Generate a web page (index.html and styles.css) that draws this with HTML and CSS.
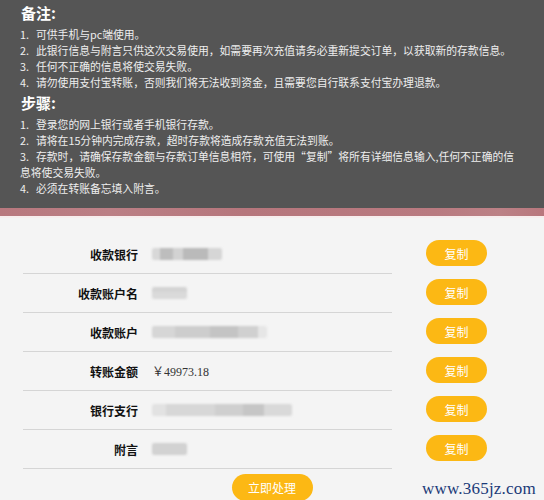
FILE: index.html
```html
<!DOCTYPE html>
<html lang="zh-CN">
<head>
<meta charset="utf-8">
<title>存款信息</title>
<link rel="stylesheet" href="styles.css">
</head>
<body>
<div class="notice">
  <h2 class="title">备注:</h2>
  <ol class="list">
    <li><span class="num">1.</span>可供手机与pc端使用。</li>
    <li><span class="num">2.</span>此银行信息与附言只供这次交易使用，如需要再次充值请务必重新提交订单，以获取新的存款信息。</li>
    <li><span class="num">3.</span>任何不正确的信息将使交易失败。</li>
    <li><span class="num">4.</span>请勿使用支付宝转账，否则我们将无法收到资金，且需要您自行联系支付宝办理退款。</li>
  </ol>
  <h2 class="title second">步骤:</h2>
  <ol class="list">
    <li><span class="num">1.</span>登录您的网上银行或者手机银行存款。</li>
    <li><span class="num">2.</span>请将在15分钟内完成存款，超时存款将造成存款充值无法到账。</li>
    <li><span class="num">3.</span>存款时，请确保存款金额与存款订单信息相符，可使用“复制”将所有详细信息输入,任何不正确的信<br>息将使交易失败。</li>
    <li><span class="num">4.</span>必须在转账备忘填入附言。</li>
  </ol>
</div>
<div class="strip"></div>
<div class="content">
  <div class="rows">
    <div class="row">
      <div class="cell"><span class="label">收款银行</span><span class="value"><span class="blur b1"></span></span></div>
      <button class="copy">复制</button>
    </div>
    <div class="row">
      <div class="cell"><span class="label">收款账户名</span><span class="value"><span class="blur b2"></span></span></div>
      <button class="copy">复制</button>
    </div>
    <div class="row">
      <div class="cell"><span class="label">收款账户</span><span class="value"><span class="blur b3"></span></span></div>
      <button class="copy">复制</button>
    </div>
    <div class="row">
      <div class="cell"><span class="label">转账金额</span><span class="value amount">￥49973.18</span></div>
      <button class="copy">复制</button>
    </div>
    <div class="row">
      <div class="cell"><span class="label">银行支行</span><span class="value"><span class="blur b5"></span></span></div>
      <button class="copy">复制</button>
    </div>
    <div class="row">
      <div class="cell"><span class="label">附言</span><span class="value"><span class="blur b6"></span></span></div>
      <button class="copy">复制</button>
    </div>
  </div>
  <button class="submit">立即处理</button>
</div>
<div class="watermark">www.365jz.com</div>
</body>
</html>
```
FILE: styles.css
```css
html, body {
  margin: 0;
  padding: 0;
}
body {
  width: 544px;
  height: 500px;
  background: #f4f4f4;
  font-family: "Noto Sans CJK SC", sans-serif;
  position: relative;
  overflow: hidden;
}
.notice {
  background: #555555;
  color: #eeeeee;
  padding: 3px 20px 12px 20px;
}
.title {
  margin: 0 0 3px 1px;
  font-size: 15px;
  line-height: 20px;
  font-weight: bold;
  color: #ffffff;
}
.title.second {
  margin-top: 3px;
}
.list {
  list-style: none;
  margin: 0;
  padding: 0;
  font-size: 10.8px;
  line-height: 16px;
}
.list li {
  white-space: nowrap;
  height: auto;
}
.num {
  display: inline-block;
  width: 16px;
  line-height: 16px;
}
.strip {
  height: 8px;
  background: linear-gradient(90deg, #b8787e 0%, #bb7f85 20%, #b6767c 45%, #b97a80 80%, #bc8186 92%, #b8777d 100%);
  border-bottom: 2px solid #f7eeee;
}
.rows {
  padding: 17px 0 0 23px;
}
.row {
  display: flex;
  align-items: flex-start;
  height: 39px;
}
.cell {
  width: 369px;
  height: 38px;
  border-bottom: 1px solid #d5d5d5;
  display: flex;
  align-items: center;
}
.label {
  width: 115px;
  text-align: right;
  font-weight: bold;
  font-size: 12px;
  color: #111;
}
.value {
  margin-left: 14px;
  display: flex;
  align-items: center;
  font-size: 12px;
  color: #333;
}
.amount {
  font-family: "Liberation Serif", "Noto Sans CJK SC", serif;
}
.blur {
  display: inline-block;
  height: 12px;
  filter: blur(1px);
  border-radius: 2px;
}
.b1 { width: 70px; background: linear-gradient(90deg, #d8d8d8 0 12%, #bdbdbd 12% 30%, #d2d2d2 30% 45%, #bababa 45% 80%, #d6d6d6 80% 100%); }
.b2 { width: 35px; background: linear-gradient(180deg, #d4d4d4 0 45%, #dadada 45% 100%); }
.b3 { width: 115px; background: linear-gradient(90deg, #d6d6d6 0 20%, #cdcdcd 20% 50%, #c4c4c4 50% 75%, #d0d0d0 75% 92%, #e6e6e6 92% 100%); }
.b5 { width: 140px; background: linear-gradient(90deg, #e2e2e2 0 10%, #d7d7d7 10% 45%, #cfcfcf 45% 65%, #c6c6c6 65% 80%, #d9d9d9 80% 100%); }
.b6 { width: 35px; background: #d2d2d2; }
.copy {
  margin: 5px 0 0 34px;
  width: 61px;
  height: 26px;
  border: 0;
  border-radius: 13px;
  background: #fcb814;
  color: #fff;
  font-size: 12px;
  font-family: "Noto Sans CJK SC", sans-serif;
  padding: 0;
}
.submit {
  display: block;
  margin: 5px auto 0;
  width: 81px;
  height: 27px;
  border: 0;
  border-radius: 14px;
  background: #fcb814;
  color: #fff;
  font-size: 12px;
  font-family: "Noto Sans CJK SC", sans-serif;
  padding: 0;
}
.watermark {
  position: absolute;
  left: 422px;
  top: 480px;
  font-family: "Liberation Serif", serif;
  font-size: 17px;
  line-height: 17px;
  color: #1b3a78;
  letter-spacing: 0.2px;
}
```
